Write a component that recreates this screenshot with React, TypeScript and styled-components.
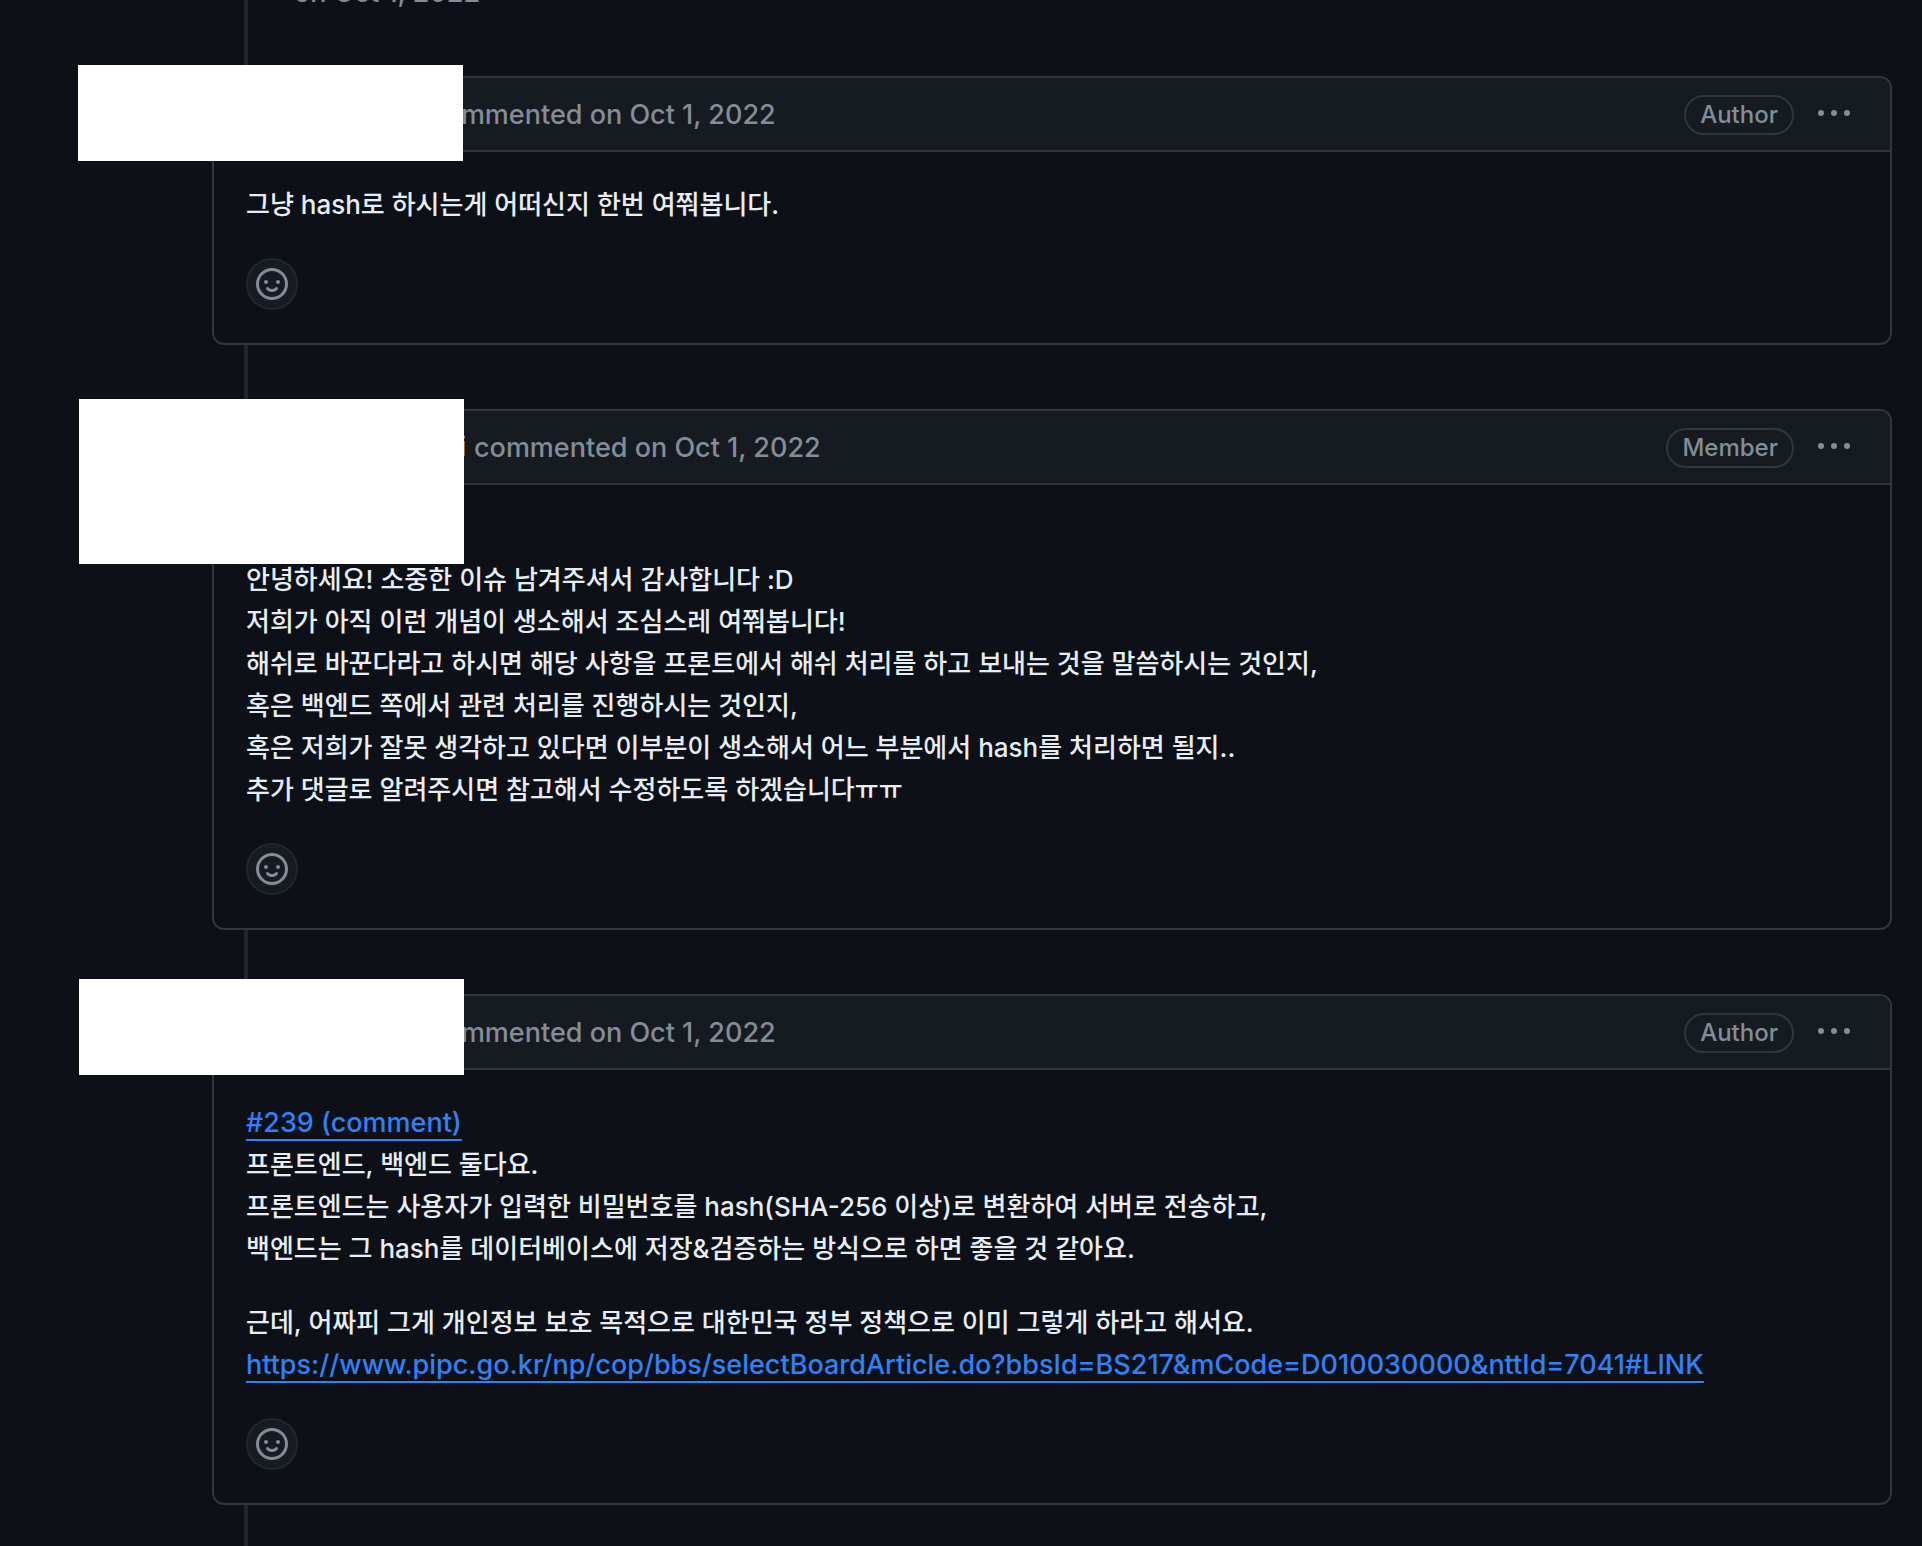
import React from "react";
import styled, { createGlobalStyle } from "styled-components";

const GlobalStyle = createGlobalStyle`
  *, *::before, *::after { box-sizing: border-box; }
  html { background: #0d1117; }
  body {
    margin: 0;
    overflow-x: hidden;
    background: #0d1117;
    color: #e6edf3;
    font-family: Inter, "Noto Sans CJK KR", "Noto Sans", sans-serif;
    font-size: 26px;
    font-weight: 500;
    line-height: 42px;
  }
`;

const Timeline = styled.main`
  position: relative;
  display: flex;
  flex-direction: column;
  gap: 64px;
  min-height: 100vh;
  padding: 0 30px 40px 212px;
  overflow: hidden;

  &::before {
    content: "";
    position: absolute;
    top: 0;
    bottom: 0;
    left: 244px;
    width: 4px;
    background: #21262d;
  }
`;

const EventDate = styled.p`
  height: 40px;
  margin: -28px 0 0;
  padding-left: 82px;
  color: #848d97;
  font-size: 27px;
  font-weight: 450;
`;

const Card = styled.article`
  position: relative;
  border: 2px solid #30363d;
  border-radius: 12px;
  background: #0d1117;
`;

const Redaction = styled.div<{ $left: number; $top: number; $height: number }>`
  position: absolute;
  left: ${(p) => p.$left}px;
  top: ${(p) => p.$top}px;
  width: 385px;
  height: ${(p) => p.$height}px;
  background: #fff;
`;

const Header = styled.header`
  display: flex;
  align-items: center;
  height: 74px;
  padding: 0 40px 0 32px;
  border-bottom: 2px solid #30363d;
  border-radius: 10px 10px 0 0;
  background: #161b22;
  color: #848d97;
  font-size: 27px;
`;

const Author = styled.strong<{ $width: number }>`
  width: ${(p) => p.$width}px;
  color: #e6edf3;
  font-weight: 600;
  text-align: right;
`;

const Meta = styled.span`
  flex: 1;
  padding: 2px 0 0 8px;
  font-weight: 450;
`;

const Badge = styled.span`
  display: flex;
  align-items: center;
  height: 40px;
  margin: 2px 24px 0 0;
  padding: 0 14px;
  border: 2px solid #30363d;
  border-radius: 20px;
  font-size: 24px;
  line-height: 36px;
  font-weight: 500;
`;

const MenuButton = styled.button`
  display: flex;
  padding: 0;
  border: 0;
  background: none;
  color: #848d97;
  cursor: pointer;
`;

const Body = styled.div`
  display: flex;
  flex-direction: column;
  align-items: flex-start;
  gap: 32px;
  padding: 32px 32px 33px;
`;

const Paragraph = styled.p`
  margin: 0;
`;

const Link = styled.a`
  color: #2f81f7;
  font-size: 27px;
  font-weight: 450;
  text-decoration: underline;
  text-decoration-thickness: 2px;
  text-decoration-skip-ink: none;
  text-underline-offset: 7px;
`;

const ReactionButton = styled.button`
  display: flex;
  align-items: center;
  justify-content: center;
  width: 52px;
  height: 52px;
  padding: 0;
  border: 2px solid #21262d;
  border-radius: 50%;
  background: #161b22;
  color: #848d97;
  cursor: pointer;
`;

const Icon = styled.svg`
  display: block;
  width: 32px;
  height: 32px;
  fill: currentColor;
`;

const KebabIcon = () => (
  <Icon viewBox="0 0 16 16" aria-hidden="true">
    <circle cx="1.5" cy="7.5" r="1.5" />
    <circle cx="8" cy="7.5" r="1.5" />
    <circle cx="14.5" cy="7.5" r="1.5" />
  </Icon>
);

const SmileyIcon = () => (
  <Icon viewBox="0 0 16 16" aria-hidden="true">
    <path d="M8 0a8 8 0 1 1 0 16A8 8 0 0 1 8 0ZM1.5 8a6.5 6.5 0 1 0 13 0 6.5 6.5 0 0 0-13 0Zm3.82 1.636a.75.75 0 0 1 1.038.175l.007.009c.103.118.22.222.35.31.264.178.683.37 1.285.37.602 0 1.02-.192 1.285-.371.13-.088.247-.192.35-.31l.007-.008a.75.75 0 0 1 1.222.87c-.06.08-.12.15-.206.236-.16.166-.338.316-.53.445-.63.418-1.37.638-2.127.629-.946 0-1.652-.308-2.126-.63a3.331 3.331 0 0 1-.735-.687.75.75 0 0 1 .184-1.044ZM12 7a1 1 0 1 1-2 0 1 1 0 0 1 2 0ZM5 8a1 1 0 1 1 0-2 1 1 0 0 1 0 2Z" />
  </Icon>
);

type CommentProps = {
  author?: string;
  authorWidth: number;
  role: string;
  cover: { left: number; top: number; height: number };
  children: React.ReactNode;
};

const Comment = ({ author, authorWidth, role, cover, children }: CommentProps) => (
  <Card>
    <Header>
      <Author $width={authorWidth}>{author}</Author>
      <Meta>commented on Oct 1, 2022</Meta>
      <Badge>{role}</Badge>
      <MenuButton type="button" aria-label="Show options">
        <KebabIcon />
      </MenuButton>
    </Header>
    <Body>
      {children}
      <ReactionButton type="button" aria-label="Add a reaction">
        <SmileyIcon />
      </ReactionButton>
    </Body>
    <Redaction $left={cover.left} $top={cover.top} $height={cover.height} />
  </Card>
);

export default function App() {
  return (
    <>
      <GlobalStyle />
      <Timeline>
        <EventDate>on Oct 1, 2022</EventDate>

        <Comment authorWidth={175} role="Author" cover={{ left: -136, top: -13, height: 96 }}>
          <Paragraph>그냥 hash로 하시는게 어떠신지 한번 여쭤봅니다.</Paragraph>
        </Comment>

        <Comment
          author="i"
          authorWidth={220}
          role="Member"
          cover={{ left: -135, top: -12, height: 165 }}
        >
          <Paragraph>
            <br />
            안녕하세요! 소중한 이슈 남겨주셔서 감사합니다 :D
            <br />
            저희가 아직 이런 개념이 생소해서 조심스레 여쭤봅니다!
            <br />
            해쉬로 바꾼다라고 하시면 해당 사항을 프론트에서 해쉬 처리를 하고 보내는 것을 말씀하시는 것인지,
            <br />
            혹은 백엔드 쪽에서 관련 처리를 진행하시는 것인지,
            <br />
            혹은 저희가 잘못 생각하고 있다면 이부분이 생소해서 어느 부분에서 hash를 처리하면 될지..
            <br />
            추가 댓글로 알려주시면 참고해서 수정하도록 하겠습니다ㅠㅠ
          </Paragraph>
        </Comment>

        <Comment authorWidth={175} role="Author" cover={{ left: -135, top: -17, height: 96 }}>
          <Paragraph>
            <Link href="#issuecomment">#239 (comment)</Link>
            <br />
            프론트엔드, 백엔드 둘다요.
            <br />
            프론트엔드는 사용자가 입력한 비밀번호를 hash(SHA-256 이상)로 변환하여 서버로 전송하고,
            <br />
            백엔드는 그 hash를 데이터베이스에 저장&amp;검증하는 방식으로 하면 좋을 것 같아요.
          </Paragraph>
          <Paragraph>
            근데, 어짜피 그게 개인정보 보호 목적으로 대한민국 정부 정책으로 이미 그렇게 하라고 해서요.
            <br />
            <Link href="https://www.pipc.go.kr/np/cop/bbs/selectBoardArticle.do?bbsId=BS217&mCode=D010030000&nttId=7041#LINK">
              https://www.pipc.go.kr/np/cop/bbs/selectBoardArticle.do?bbsId=BS217&amp;mCode=D010030000&amp;nttId=7041#LINK
            </Link>
          </Paragraph>
        </Comment>
      </Timeline>
    </>
  );
}
